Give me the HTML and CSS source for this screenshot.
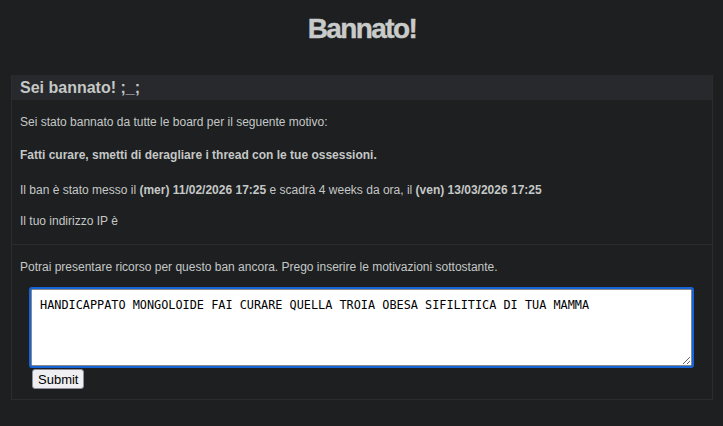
FILE: index.html
```html
<!DOCTYPE html>
<html lang="it">
<head>
<meta charset="utf-8">
<title>Bannato!</title>
<link rel="stylesheet" href="styles.css">
</head>
<body>
<h1 class="title">Bannato!</h1>
<div class="ban-box">
  <h2 class="ban-head">Sei bannato! ;_;</h2>
  <div class="ban-info">
    <p>Sei stato bannato da tutte le board per il seguente motivo:</p>
    <p><strong>Fatti curare, smetti di deragliare i thread con le tue ossessioni.</strong></p>
    <p class="ban-date">Il ban è stato messo il <strong>(mer) 11/02/2026 17:25</strong> e scadrà 4 weeks da ora, il <strong>(ven) 13/03/2026 17:25</strong></p>
    <p>Il tuo indirizzo IP è</p>
  </div>
  <div class="appeal">
    <p>Potrai presentare ricorso per questo ban ancora. Prego inserire le motivazioni sottostante.</p>
    <form class="appeal-form">
      <textarea class="appeal-text">HANDICAPPATO MONGOLOIDE FAI CURARE QUELLA TROIA OBESA SIFILITICA DI TUA MAMMA</textarea>
      <button type="button" class="submit-btn">Submit</button>
    </form>
  </div>
</div>
</body>
</html>
```

FILE: styles.css
```css
html, body {
  margin: 0;
  padding: 0;
  background: #1d1f21;
}
body {
  padding: 0 10px 0 11px;
  color: #c5c8c6;
  font-family: "Liberation Sans", Arial, sans-serif;
  font-size: 12px;
}
.title {
  margin: 13px 0 30px;
  text-align: center;
  font-family: "Liberation Sans", Arial, sans-serif;
  font-weight: bold;
  font-size: 28px;
  line-height: 32px;
  letter-spacing: -1.6px;
  color: #c8cbc9;
  -webkit-text-stroke: 0.4px #c8cbc9;
}
.ban-box {
  border: 1px solid #2a2c2f;
  border-top: none;
}
.ban-head {
  margin: 0;
  height: 25px;
  line-height: 25px;
  padding: 0 8px;
  background: #27292c;
  font-size: 16px;
  font-weight: bold;
  color: #c5c8c6;
}
.ban-info {
  padding: 12px 8px;
  border-bottom: 1px solid #2a2c2f;
}
.ban-info p, .appeal p {
  margin: 0 0 12px;
  line-height: 21px;
}
.ban-info .ban-date {
  margin-top: 14px;
  margin-bottom: 10px;
}
.ban-info p:last-child {
  margin-bottom: 0;
}
.appeal {
  padding: 12px 8px 10px;
}
.appeal p {
  margin-bottom: 11px;
}
.appeal-form {
  display: flex;
  flex-direction: column;
  align-items: flex-start;
  gap: 3px;
  padding-left: 11px;
}
.appeal-text {
  box-sizing: border-box;
  width: 661px;
  height: 77px;
  margin: 0;
  padding: 8px 8px;
  border: 1px solid #8a8a8a;
  outline: 2px solid #1565d8;
  border-radius: 1px;
  background: #fff;
  color: #000;
  font-family: "DejaVu Sans Mono", monospace;
  font-size: 11.85px;
  line-height: 15px;
  resize: both;
}
.submit-btn {
  margin: 0 0 0 1px;
  height: 20px;
  padding: 0 5px;
  font-family: "Liberation Sans", Arial, sans-serif;
  font-size: 13px;
  color: #000;
  background: #efeff2;
  border: 1px solid #8f8f9d;
  border-radius: 3px;
}
```
